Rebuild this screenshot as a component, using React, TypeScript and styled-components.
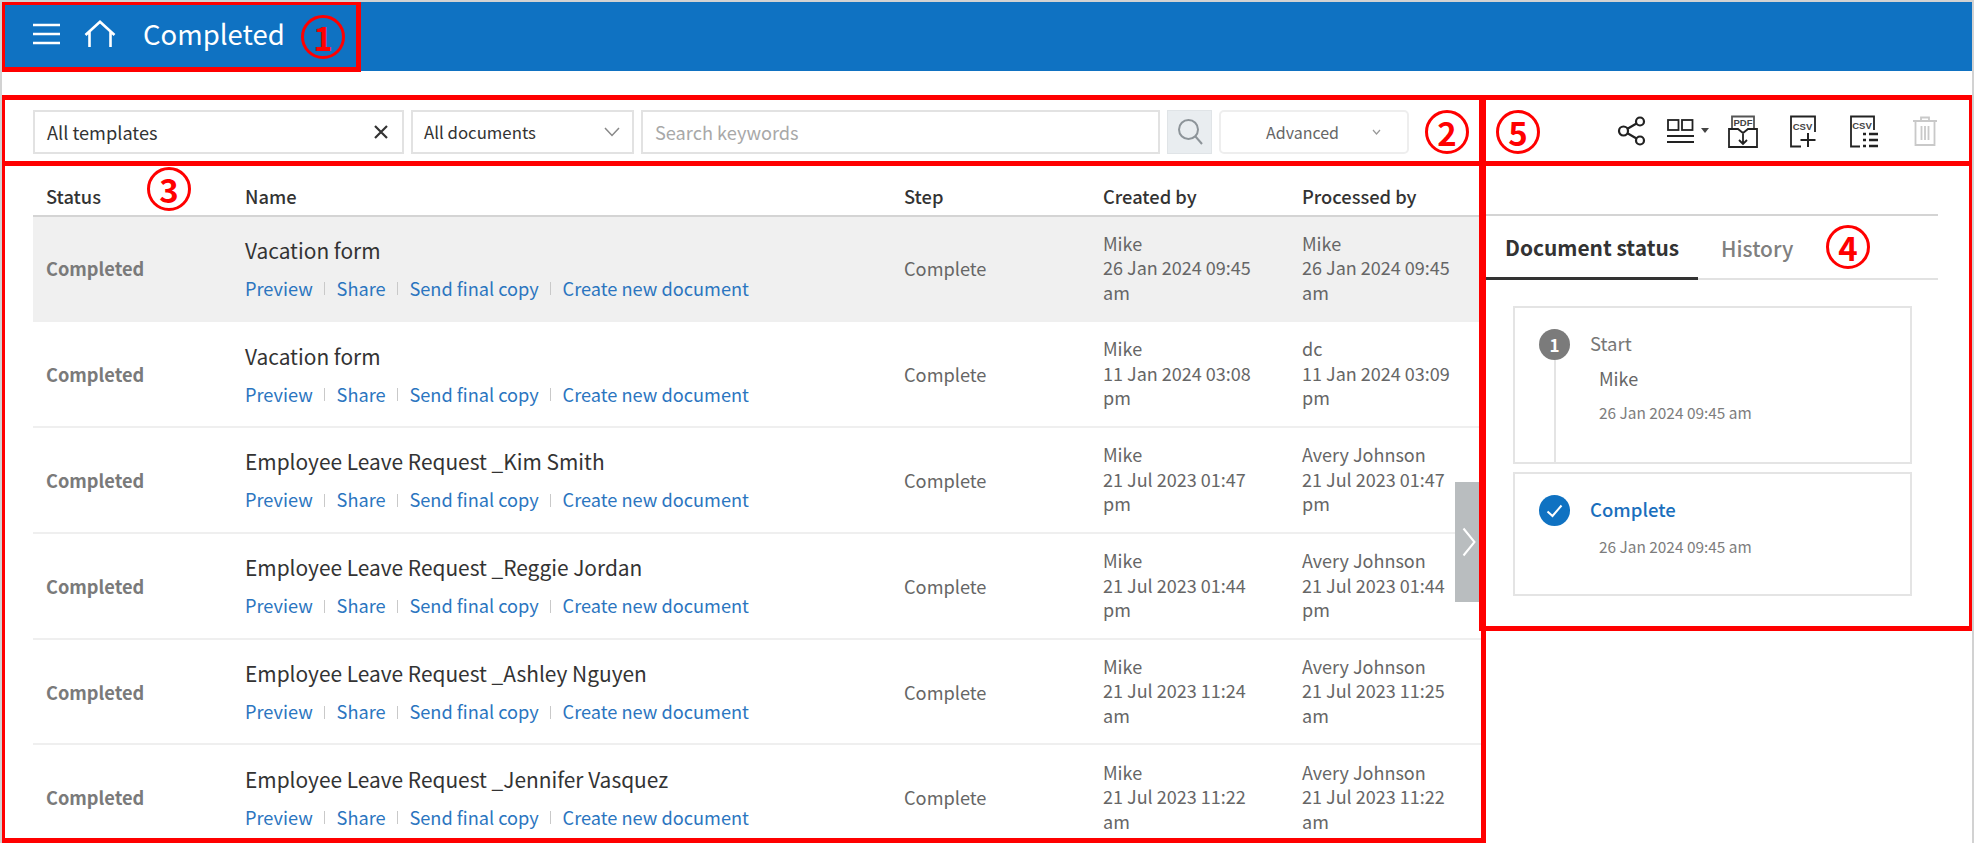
import React from "react";
import styled, { createGlobalStyle } from "styled-components";

const Global = createGlobalStyle`
  html, body { margin: 0; padding: 0; background: #fff; }
  body { font-family: "Noto Sans CJK KR", "Noto Sans", sans-serif; }
  * { box-sizing: border-box; }
`;

const Page = styled.div`
  position: relative;
  width: 1974px;
  height: 843px;
  overflow: hidden;
  background: #fff;
  border-top: 2px solid #d2d2d2;
  border-left: 2px solid #d2d2d2;
  border-right: 2px solid #d2d2d2;
`;

const Header = styled.header`
  height: 69px;
  background: #0f72c2;
  display: flex;
  align-items: center;
  padding: 0 0 6px 31px;
  color: #fff;
`;
const HeaderIcon = styled.svg<{ $gap: number }>`
  display: block;
  margin-right: ${(p) => p.$gap}px;
  flex: none;
`;
const Title = styled.h1`
  margin: 0;
  font-size: 27.5px;
  font-weight: 400;
  line-height: 1;
  position: relative;
  left: -1px;
`;

const Body = styled.div`
  display: flex;
  margin-top: 24px;
`;
const Left = styled.section`
  width: 1481px;
  padding-left: 31px;
  flex: none;
`;
const Right = styled.aside`
  flex: 1;
`;

const Filters = styled.div`
  height: 70px;
  padding-top: 4px;
  display: flex;
  align-items: center;
`;
const Field = styled.div<{ $w: number; $mr: number }>`
  width: ${(p) => p.$w}px;
  margin-right: ${(p) => p.$mr}px;
  height: 44px;
  border: 2px solid #e2e2e2;
  background: #fff;
  display: flex;
  align-items: center;
  justify-content: space-between;
  padding: 0 12px;
  font-size: 18.2px;
  color: #333;
  flex: none;
`;
const Placeholder = styled.span`
  color: #a8a8a8;
`;
const SearchButton = styled.div`
  width: 45px;
  height: 44px;
  margin-right: 7px;
  background: #e9edf0;
  border: 1px solid #e0e4e7;
  display: flex;
  align-items: center;
  justify-content: center;
  flex: none;
`;
const AdvancedButton = styled.div`
  width: 190px;
  height: 44px;
  border: 2px solid #eeeeee;
  border-radius: 5px;
  display: flex;
  align-items: center;
  padding-left: 45px;
  font-size: 16px;
  color: #666;
  flex: none;
  gap: 33px;
`;

const Table = styled.div`
  width: 1450px;
`;
const HeadRow = styled.div`
  display: grid;
  grid-template-columns: 199px 659px 199px 199px 194px;
  height: 51.5px;
  align-items: center;
  border-bottom: 2px solid #d4d4d4;
  font-size: 18.3px;
  font-weight: 500;
  color: #333;
`;
const HeadCell = styled.div`
  padding-left: 13px;
  padding-top: 12px;
`;
const Row = styled.div<{ $active?: boolean }>`
  display: grid;
  grid-template-columns: 199px 659px 199px 199px 194px;
  height: 105.8px;
  align-items: center;
  background: ${(p) => (p.$active ? "#f0f0f0" : "#fff")};
  border-bottom: 2px solid #efefef;
`;
const StatusCell = styled.div`
  padding-left: 13px;
  font-size: 18.2px;
  font-weight: 700;
  color: #7a7a7a;
`;
const NameCell = styled.div`
  padding-left: 13px;
`;
const DocName = styled.div`
  font-size: 20.9px;
  color: #333;
  line-height: 28px;
  margin-bottom: 12px;
  margin-top: -1px;
`;
const Links = styled.div`
  display: flex;
  align-items: center;
  height: 24px;
`;
const DocLink = styled.a`
  font-size: 18.2px;
  color: #2b75bf;
  line-height: 24px;
`;
const Sep = styled.span`
  width: 1px;
  height: 13px;
  background: #c9c9c9;
  margin: 2px 11.4px 0;
`;
const StepCell = styled.div`
  padding-left: 13px;
  font-size: 18.2px;
  color: #666;
`;
const MetaCell = styled.div`
  padding: 0 20px 0 13px;
  margin-top: -2px;
  font-size: 18px;
  line-height: 24.5px;
  color: #666;
`;

const Actions = styled.div`
  height: 70px;
  padding-top: 2px;
  display: flex;
  align-items: center;
  padding-left: 134px;
`;
const ActionIcon = styled.svg<{ $gap: number }>`
  display: block;
  flex: none;
  margin-right: ${(p) => p.$gap}px;
`;

const Collapse = styled.div`
  position: absolute;
  left: 1453px;
  top: 480px;
  width: 28px;
  height: 120px;
  background: #b9bdbf;
  display: flex;
  align-items: center;
  justify-content: center;
`;

const Status = styled.div`
  width: 455px;
  margin-top: 49px;
  border-top: 2px solid #d4d4d4;
`;
const Tabs = styled.div`
  height: 64px;
  display: flex;
  border-bottom: 2px solid #e2e2e2;
`;
const Tab = styled.div<{ $active?: boolean }>`
  height: 64px;
  padding: ${(p) => (p.$active ? "0 19px 0 22px" : "0 0 0 23px")};
  display: flex;
  align-items: center;
  font-size: 20.9px;
  font-weight: ${(p) => (p.$active ? 700 : 500)};
  color: ${(p) => (p.$active ? "#333" : "#808080")};
  border-bottom: ${(p) => (p.$active ? "3px solid #333" : "0")};
`;
const Steps = styled.div`
  padding: 26px 0 0 30px;
`;
const StepCard = styled.div<{ $h: number; $mb?: number }>`
  position: relative;
  width: 399px;
  height: ${(p) => p.$h}px;
  margin-bottom: ${(p) => p.$mb ?? 0}px;
  border: 2px solid #e4e4e4;
  padding: 21px 0 0 24px;
`;
const StepHead = styled.div`
  display: flex;
  align-items: center;
  gap: 20px;
`;
const Badge = styled.div<{ $done?: boolean }>`
  position: relative;
  width: 31px;
  height: 31px;
  border-radius: 50%;
  background: ${(p) => (p.$done ? "#0f72c2" : "#7b7b7b")};
  color: #fff;
  font-size: 17px;
  font-weight: 700;
  display: flex;
  align-items: center;
  justify-content: center;
  flex: none;
`;
const Connector = styled.div`
  position: absolute;
  left: 39px;
  top: 52px;
  bottom: 0;
  width: 2px;
  background: #e4e4e4;
`;
const StepLabel = styled.div<{ $done?: boolean }>`
  position: relative;
  top: -2px;
  font-size: 18.5px;
  font-weight: ${(p) => (p.$done ? 500 : 400)};
  color: ${(p) => (p.$done ? "#1a6fbd" : "#777")};
`;
const Person = styled.div`
  margin: 3px 0 0 60px;
  font-size: 18px;
  line-height: 30px;
  color: #666;
`;
const StepDate = styled.div<{ $top: number }>`
  margin: ${(p) => p.$top}px 0 0 60px;
  font-size: 15.4px;
  line-height: 22px;
  color: #7d7d7d;
`;

const Annotations = styled.div`
  position: absolute;
  inset: -2px;
  pointer-events: none;
`;
const RedBox = styled.div<{ $x: number; $y: number; $w: number; $h: number }>`
  position: absolute;
  left: ${(p) => p.$x}px;
  top: ${(p) => p.$y}px;
  width: ${(p) => p.$w}px;
  height: ${(p) => p.$h}px;
  border: 5px solid #ff0000;
`;
const Marker = styled.div<{ $x: number; $y: number }>`
  position: absolute;
  left: ${(p) => p.$x - 22}px;
  top: ${(p) => p.$y - 22}px;
  width: 44px;
  height: 44px;
  border: 3px solid #ff0000;
  border-radius: 50%;
  background: transparent;
  color: #ff0000;
  font-size: 33px;
  font-weight: 700;
  line-height: 38px;
  text-align: center;
`;

const rows = [
  { name: "Vacation form", c: ["Mike", "26 Jan 2024 09:45 am"], p: ["Mike", "26 Jan 2024 09:45 am"] },
  { name: "Vacation form", c: ["Mike", "11 Jan 2024 03:08 pm"], p: ["dc", "11 Jan 2024 03:09 pm"] },
  { name: "Employee Leave Request _Kim Smith", c: ["Mike", "21 Jul 2023 01:47 pm"], p: ["Avery Johnson", "21 Jul 2023 01:47 pm"] },
  { name: "Employee Leave Request _Reggie Jordan", c: ["Mike", "21 Jul 2023 01:44 pm"], p: ["Avery Johnson", "21 Jul 2023 01:44 pm"] },
  { name: "Employee Leave Request _Ashley Nguyen", c: ["Mike", "21 Jul 2023 11:24 am"], p: ["Avery Johnson", "21 Jul 2023 11:25 am"] },
  { name: "Employee Leave Request _Jennifer Vasquez", c: ["Mike", "21 Jul 2023 11:22 am"], p: ["Avery Johnson", "21 Jul 2023 11:22 am"] },
];

const Meta = ({ lines }: { lines: string[] }) => (
  <MetaCell>
    {lines[0]}
    <br />
    {lines[1]}
  </MetaCell>
);

export default function App() {
  return (
    <>
      <Global />
      <Page>
        <Header>
          <HeaderIcon $gap={24} width="27" height="22" viewBox="0 0 27 22" fill="none" stroke="#fff" strokeWidth="2.4">
            <path d="M0 2h27M0 11h27M0 20h27" />
          </HeaderIcon>
          <HeaderIcon $gap={28} width="32" height="28" viewBox="0 0 32 28" fill="none" stroke="#fff" strokeWidth="2.6">
            <path d="M1.5 15 16 1.8 30.5 15M5.500 11.500V27M26.500 11.500V27" />
          </HeaderIcon>
          <Title>Completed</Title>
        </Header>
        <Body>
          <Left>
            <Filters>
              <Field $w={371} $mr={7}>
                <span>All templates</span>
                <svg width="16" height="16" viewBox="0 0 16 16" stroke="#333" strokeWidth="2.2" fill="none" style={{ marginRight: 1 }}>
                  <path d="M2 2l12 12M14 2 2 14" />
                </svg>
              </Field>
              <Field $w={223} $mr={7}>
                <span style={{ fontSize: 16.8, marginLeft: -1 }}>All documents</span>
                <svg width="16" height="10" viewBox="0 0 16 10" stroke="#888" strokeWidth="1.5" fill="none">
                  <path d="M1 1l7 7.5L15 1" />
                </svg>
              </Field>
              <Field $w={519} $mr={7}>
                <Placeholder>Search keywords</Placeholder>
              </Field>
              <SearchButton>
                <svg width="28" height="30" viewBox="0 0 28 30" fill="none" stroke="#8d9499" strokeWidth="2">
                  <circle cx="12.5" cy="12.5" r="9.5" />
                  <path d="M19.5 19.5 26 27" />
                </svg>
              </SearchButton>
              <AdvancedButton>
                <span>Advanced</span>
                <svg width="9" height="6" viewBox="0 0 9 6" stroke="#999" strokeWidth="1.2" fill="none">
                  <path d="M1 1l3.5 4L8 1" />
                </svg>
              </AdvancedButton>
            </Filters>
            <Table>
              <HeadRow>
                <HeadCell>Status</HeadCell>
                <HeadCell>Name</HeadCell>
                <HeadCell>Step</HeadCell>
                <HeadCell>Created by</HeadCell>
                <HeadCell>Processed by</HeadCell>
              </HeadRow>
              {rows.map((r, i) => (
                <Row key={i} $active={i === 0}>
                  <StatusCell>Completed</StatusCell>
                  <NameCell>
                    <DocName>{r.name}</DocName>
                    <Links>
                      <DocLink>Preview</DocLink>
                      <Sep />
                      <DocLink>Share</DocLink>
                      <Sep />
                      <DocLink>Send final copy</DocLink>
                      <Sep />
                      <DocLink>Create new document</DocLink>
                    </Links>
                  </NameCell>
                  <StepCell>Complete</StepCell>
                  <Meta lines={r.c} />
                  <Meta lines={r.p} />
                </Row>
              ))}
            </Table>
          </Left>
          <Right>
            <Actions>
              <ActionIcon $gap={19} width="30" height="30" viewBox="0 0 30 30" fill="none" stroke="#222" strokeWidth="2.2">
                <circle cx="6.5" cy="15" r="4.5" />
                <circle cx="23" cy="5.5" r="4" />
                <circle cx="23" cy="24.5" r="4" />
                <path d="M10.5 12.8 19.5 7.5M10.5 17.2 19.5 22.5" />
              </ActionIcon>
              <ActionIcon $gap={18} width="44" height="28" viewBox="0 0 44 28" fill="none" stroke="#222" strokeWidth="1.8">
                <rect x="2" y="3" width="10.5" height="10" />
                <rect x="16" y="3" width="10.5" height="10" />
                <path d="M1 19h27M1 25h27" />
                <path d="M35 11h8l-4 5z" fill="#444" stroke="none" />
              </ActionIcon>
              <ActionIcon $gap={31} width="30" height="33" viewBox="0 0 30 33" fill="none" stroke="#222" strokeWidth="1.8">
                <path d="M4 14V1.500h22V14" stroke="#555" />
                <text x="15" y="11" fontFamily="Liberation Sans, sans-serif" fontSize="9.5" fontWeight="700" textAnchor="middle" fill="#444" stroke="none">PDF</text>
                <path d="M1 14h9l5 4 5-4h9v18H1zM15 19v9M11 25l4 4 4-4" />
              </ActionIcon>
              <ActionIcon $gap={31} width="29" height="33" viewBox="0 0 29 33" fill="none" stroke="#222" strokeWidth="1.8">
                <path d="M26 17V1.500H2V31.500h10" />
                <text x="13.500" y="15" fontFamily="Liberation Sans, sans-serif" fontSize="9.500" fontWeight="700" textAnchor="middle" fill="#444" stroke="none">CSV</text>
                <path d="M19 18v14M11.500 25h15" strokeWidth="2" />
              </ActionIcon>
              <ActionIcon $gap={33} width="30" height="33" viewBox="0 0 30 33" fill="none" stroke="#222" strokeWidth="1.8">
                <path d="M25 15V1.500H2V31.500h9" />
                <text x="13" y="14" fontFamily="Liberation Sans, sans-serif" fontSize="9.500" fontWeight="700" textAnchor="middle" fill="#444" stroke="none">CSV</text>
                <path d="M14 19h3M20 19h9M14 25h3M20 25h9M14 31h3M20 31h9" strokeWidth="2.4" />
              </ActionIcon>
              <ActionIcon $gap={0} width="26" height="30" viewBox="0 0 26 30" fill="none" stroke="#c9c9c9" strokeWidth="1.8">
                <path d="M1 5h24M9 5V1.500h8V5M3.500 5v24h19V5M9.500 10v14M13 10v14M16.500 10v14" />
              </ActionIcon>
            </Actions>
            <Status>
              <Tabs>
                <Tab $active>Document status</Tab>
                <Tab>History</Tab>
              </Tabs>
              <Steps>
                <StepCard $h={158} $mb={8}>
                  <StepHead>
                    <Badge>1</Badge>
                    <StepLabel>Start</StepLabel>
                  </StepHead>
                  <Connector />
                  <Person>Mike</Person>
                  <StepDate $top={8}>26 Jan 2024 09:45 am</StepDate>
                </StepCard>
                <StepCard $h={124}>
                  <StepHead>
                    <Badge $done>
                      <svg width="17" height="14" viewBox="0 0 17 14" fill="none" stroke="#fff" strokeWidth="2">
                        <path d="M1.500 7.500 6.500 12 15.500 1.500" />
                      </svg>
                    </Badge>
                    <StepLabel $done>Complete</StepLabel>
                  </StepHead>
                  <StepDate $top={9}>26 Jan 2024 09:45 am</StepDate>
                </StepCard>
              </Steps>
            </Status>
          </Right>
        </Body>
        <Collapse>
          <svg width="14" height="30" viewBox="0 0 14 30" fill="none" stroke="#fff" strokeWidth="2">
            <path d="M1.500 1.500 12.500 15 1.500 28.500" />
          </svg>
        </Collapse>
        <Annotations>
          <RedBox $x={0} $y={0} $w={361} $h={72} />
          <RedBox $x={0} $y={95} $w={1486} $h={71} />
          <RedBox $x={1479} $y={95} $w={495} $h={71} />
          <RedBox $x={0} $y={161} $w={1486} $h={682} />
          <RedBox $x={1479} $y={161} $w={495} $h={470} />
          <Marker $x={323} $y={37}>1</Marker>
          <Marker $x={1447} $y={132}>2</Marker>
          <Marker $x={169} $y={189}>3</Marker>
          <Marker $x={1848} $y={247}>4</Marker>
          <Marker $x={1518} $y={132}>5</Marker>
        </Annotations>
      </Page>
    </>
  );
}
